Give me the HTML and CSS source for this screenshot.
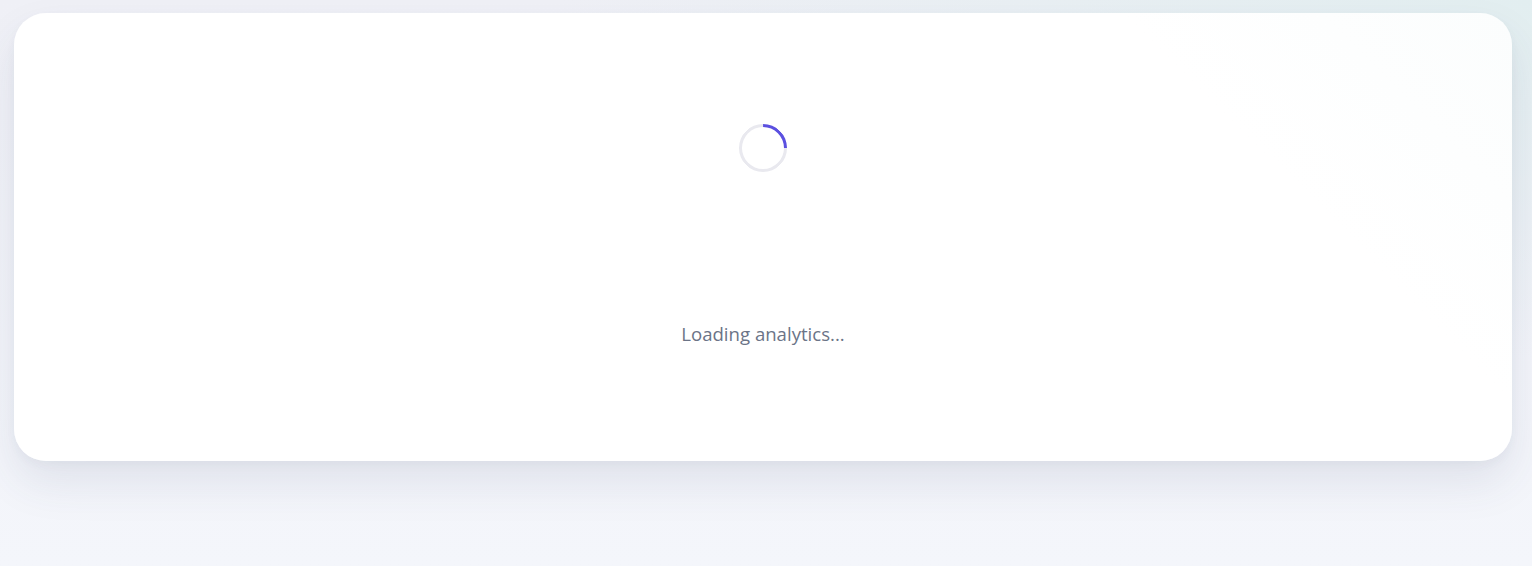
FILE: index.html
```html
<!DOCTYPE html>
<html>
<head>
<meta charset="utf-8">
<link rel="stylesheet" href="styles.css">
</head>
<body>
<div class="page">
  <div class="card">
    <div class="spinner"></div>
    <p class="label">Loading analytics...</p>
  </div>
</div>
</body>
</html>
```
FILE: styles.css
```css
html, body {
  margin: 0;
  height: 100%;
}
body {
  background: radial-gradient(ellipse at 100% 0%, #e2eef0 0%, rgba(226,238,240,0) 45%),
              linear-gradient(180deg, #eff0f6 0%, #f4f6fb 100%);
  font-family: "Segoe UI", "Open Sans", "Noto Sans", sans-serif;
  overflow: hidden;
}
.page {
  padding: 13px 20px 0 14px;
}
.card {
  height: 448px;
  box-sizing: border-box;
  background: linear-gradient(225deg, #fbfdfd 0%, #ffffff 20%, #ffffff 100%);
  border-radius: 32px;
  box-shadow: 0 22px 44px rgba(60, 70, 110, 0.10), 0 4px 10px rgba(60, 70, 110, 0.04);
  display: flex;
  flex-direction: column;
  align-items: center;
  justify-content: center;
  padding-bottom: 4px;
}
.spinner {
  width: 48px;
  height: 48px;
  box-sizing: border-box;
  border-radius: 50%;
  border: 3px solid #e9e9ef;
  border-top-color: #5b50e0;
  transform: rotate(45deg);
}
.label {
  margin: 150px 0 0;
  font-size: 18.6px;
  line-height: 24px;
  color: #6b7487;
}
```
